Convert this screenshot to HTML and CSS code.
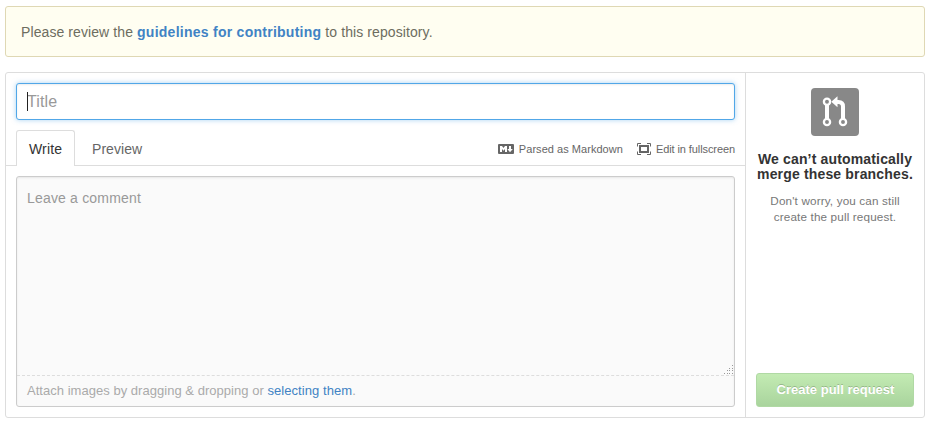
FILE: index.html
```html
<!DOCTYPE html>
<html lang="en">
<head>
<meta charset="utf-8">
<title>Open a pull request</title>
<link rel="stylesheet" href="styles.css">
</head>
<body>
<main class="page">
  <div class="notice">Please review the <a href="#">guidelines for contributing</a> to this repository.</div>
  <form class="panel">
    <section class="editor">
      <div class="title-field">
        <input class="title-input" type="text" placeholder="Title" aria-label="Title">
        <span class="caret"></span>
      </div>
      <nav class="tabs">
        <a class="tab tab-active" href="#">Write</a>
        <a class="tab" href="#">Preview</a>
        <div class="actions">
          <a class="action action-markdown" href="#">
            <svg class="icon-markdown" width="16" height="10" viewBox="0 0 16 10">
              <rect width="16" height="10" rx="1" fill="#666"/>
              <path d="M2 8V2h2l1.500 2L7 2h2v6H7V5L5.500 6.700 4 5v3zM11 2h2v3h1.800L12 8.300 9.300 5H11z" fill="#fff"/>
            </svg>
            <span>Parsed as Markdown</span>
          </a>
          <a class="action action-fullscreen" href="#">
            <svg class="icon-screen" width="14" height="12" viewBox="0 0 14 12" fill="none" stroke="#666">
              <path d="M4 .5H.5V3.500M10 .5h3.500V3.500M4 11.500H.5V8.500M10 11.500h3.500V8.500"/>
              <rect x="3" y="3" width="8" height="6" stroke-width="2"/>
            </svg>
            <span>Edit in fullscreen</span>
          </a>
        </div>
      </nav>
      <div class="comment">
        <div class="comment-body">
          <span>Leave a comment</span>
          <svg class="grip" width="10" height="10" viewBox="0 0 10 10" fill="#999">
            <path d="M8 0h1v1H8zM8 3h1v1H8zM5 3h1v1H5zM8 5h1v1H8zM5 5h1v1H5zM3 5h1v1H3zM8 8h1v1H8zM5 8h1v1H5zM3 8h1v1H3zM0 8h1v1H0z"/>
          </svg>
        </div>
        <div class="attach">Attach images by dragging &amp; dropping or <a href="#">selecting them</a>.</div>
      </div>
    </section>
    <aside class="merge">
      <svg class="merge-icon" width="48" height="48" viewBox="0 0 48 48" fill="none" stroke="#fff">
        <rect width="48" height="48" rx="4" fill="#888" stroke="none"/>
        <path d="M16 17v14M32 31V18.500q0-4.500-4.500-4.500H25" stroke-width="4"/>
        <path d="M20.300 13.800 26.500 8.300v11z" fill="#fff" stroke="none"/>
        <g fill="#888" stroke-width="2.300"><circle cx="16" cy="13.800" r="3.100"/><circle cx="16" cy="34" r="3.100"/><circle cx="32" cy="34" r="3.100"/></g>
      </svg>
      <h3 class="merge-title">We can’t automatically merge these branches.</h3>
      <p class="merge-text">Don't worry, you can still create the pull request.</p>
      <button class="submit" type="button">Create pull request</button>
    </aside>
  </form>
</main>
</body>
</html>
```
FILE: styles.css
```css
* { box-sizing: border-box; }
body {
  margin: 0;
  background: #fff;
  color: #333;
  font: 14px/20px "Liberation Sans", Arial, sans-serif;
}
a { color: #4183c4; text-decoration: none; }
.page { width: 920px; margin: 6px 0 0 5px; }
.notice {
  height: 51px;
  padding: 15px;
  border: 1px solid #dfd8b4;
  border-radius: 3px;
  background: #fffef1;
  color: #6d6d60;
  letter-spacing: .09px;
}
.notice a { font-weight: bold; letter-spacing: .26px; }
.panel {
  display: flex;
  height: 346px;
  margin-top: 15px;
  border: 1px solid #ddd;
  border-radius: 3px;
}
.editor { width: 740px; padding-top: 10px; border-right: 1px solid #ddd; }
.title-field { position: relative; height: 37px; margin: 0 10px; }
.title-input {
  display: block;
  width: 100%;
  height: 37px;
  padding: 0 10px;
  border: 1px solid #51a7e8;
  border-radius: 3px;
  outline: none;
  background: #fff;
  box-shadow: inset 0 1px 2px rgba(0, 0, 0, .075), 0 0 5px rgba(81, 167, 232, .5);
  font: 16px "Liberation Sans", Arial, sans-serif;
  letter-spacing: .1px;
}
.title-input::placeholder { color: #999; opacity: 1; }
.caret { position: absolute; left: 11px; top: 9px; width: 1px; height: 19px; background: #222; }
.tabs {
  display: flex;
  height: 36px;
  margin-top: 10px;
  padding: 0 10px;
  border-bottom: 1px solid #ddd;
}
.tab { height: 36px; padding: 8px 12px; border: 1px solid transparent; color: #666; letter-spacing: .06px; }
.tab + .tab { margin-left: 4px; }
.tab-active {
  width: 59px;
  border-color: #ddd;
  border-bottom: 0;
  border-radius: 3px 3px 0 0;
  background: #fff;
  color: #333;
  letter-spacing: .15px;
}
.actions { display: flex; align-items: center; gap: 14px; height: 38px; margin-left: auto; }
.action { display: flex; align-items: center; gap: 5px; color: #666; font-size: 11px; }
.action-markdown { letter-spacing: .04px; }
.action-fullscreen { letter-spacing: -.09px; }
.comment {
  height: 231px;
  margin: 10px 10px 0;
  border: 1px solid #ccc;
  border-radius: 3px;
  background: #fafafa;
  box-shadow: inset 0 1px 2px rgba(0, 0, 0, .075);
}
.comment-body {
  position: relative;
  height: 199px;
  padding: 11px 10px;
  border-bottom: 1px dashed #ddd;
  color: #999;
  letter-spacing: .18px;
}
.grip { position: absolute; right: 0; bottom: 0; }
.attach { padding: 5px 10px; color: #aaa; font-size: 13px; letter-spacing: .03px; }
.attach a { letter-spacing: .07px; }
.merge {
  display: flex;
  flex: 1;
  flex-direction: column;
  align-items: center;
  padding: 15px 10px 10px;
  text-align: center;
}
.merge-title { margin: 16px -5px 0; font-size: 14px; line-height: 15px; letter-spacing: .16px; }
.merge-text { width: 144px; margin: 11px 0 0; color: #777; font-size: 11.700px; line-height: 16px; letter-spacing: .15px; }
.submit {
  width: 158px;
  height: 34px;
  margin-top: auto;
  padding: 0 0 2px 1px;
  border: 1px solid #b0d9a4;
  border-radius: 3px;
  background: linear-gradient(#c3ebb3, #a9d49d);
  color: #fff;
  font: bold 13px "Liberation Sans", Arial, sans-serif;
  text-shadow: 0 -1px 0 rgba(0, 0, 0, .2);
}
```
